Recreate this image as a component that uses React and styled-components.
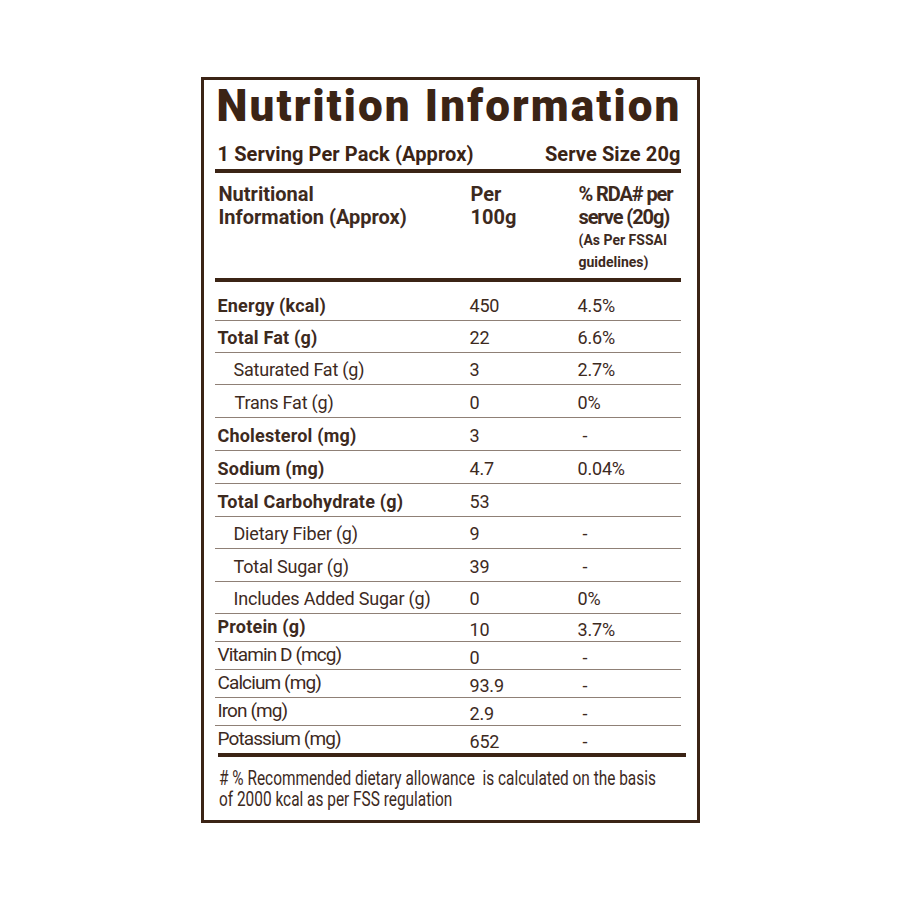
import React from 'react';
import styled, { createGlobalStyle } from 'styled-components';

const GlobalStyle = createGlobalStyle`
  body {
    margin: 0;
    background: #ffffff;
    font-family: Roboto, "Liberation Sans", Arial, sans-serif;
  }
`;

const BROWN = '#3b2415';
const TEXT = '#3d2a1e';
const LINE = '#8f8076';

const Page = styled.div`
  width: 900px;
  height: 900px;
  padding-top: 77px;
  box-sizing: border-box;
`;

const Label = styled.div`
  width: 499px;
  height: 746px;
  margin: 0 auto;
  border: 3px solid ${BROWN};
  box-sizing: border-box;
  padding: 0 16px 0 11px;
  display: flex;
  flex-direction: column;
  color: ${TEXT};
`;

const Title = styled.h1`
  margin: 4px 0 0 2px;
  font-size: 44px;
  line-height: 44px;
  font-weight: 900;
  color: ${BROWN};
  letter-spacing: 2.1px;
  white-space: nowrap;
`;

const Serving = styled.div`
  margin: 15px 0 4px 3px;
  display: flex;
  justify-content: space-between;
  font-size: 20px;
  line-height: 22px;
  font-weight: 700;
  letter-spacing: 0.1px;
  color: ${BROWN};
`;

const Rule = styled.div`
  height: 4px;
  background: ${BROWN};
  margin-right: ${p => p.$over || 0}px;
  margin-left: ${p => p.$shift || 0}px;
`;

const Header = styled.div`
  height: 105px;
  box-sizing: border-box;
  padding: 10px 0 0 4px;
  display: grid;
  grid-template-columns: 252px 108px 1fr;
  align-items: start;
  font-size: 20px;
  line-height: 22.5px;
  font-weight: 700;
  white-space: nowrap;
`;

const RdaHead = styled.div`
  letter-spacing: -1.1px;
`;

const Small = styled.div`
  margin-top: 2px;
  font-size: 14px;
  line-height: 21.7px;
  font-weight: 700;
  letter-spacing: 0;
`;

const Row = styled.div`
  height: ${p => p.$h}px;
  box-sizing: border-box;
  padding-left: 3px;
  border-bottom: ${p => (p.$last ? 'none' : `1px solid ${LINE}`)};
  display: grid;
  grid-template-columns: 252px 108px 1fr;
  align-items: end;
  font-size: 18px;
  line-height: 20px;
`;

const Name = styled.div`
  padding-left: ${p => p.$indent || 0}px;
  padding-bottom: 4px;
  font-weight: ${p => (p.$bold ? 700 : 400)};
  font-size: ${p => (p.$big ? '19px' : '18px')};
  letter-spacing: ${p => (p.$big ? '-0.9px' : p.$bold ? '0.2px' : '-0.2px')};
  white-space: nowrap;
`;

const Value = styled.div`
  padding-bottom: ${p => (p.$drop ? 1 : 4)}px;
  padding-left: ${p => (p.$dash ? 5 : 0)}px;
  letter-spacing: -0.2px;
`;

const Footnote = styled.p`
  margin: 11px 0 0 4px;
  font-size: 19.5px;
  line-height: 21px;
  width: 560px;
  transform: scaleX(0.79);
  transform-origin: left top;
  white-space: pre;
`;

const rows = [
  { label: 'Energy (kcal)', bold: true, per: '450', rda: '4.5%', h: 39 },
  { label: 'Total Fat (g)', bold: true, per: '22', rda: '6.6%', h: 32 },
  { label: 'Saturated Fat (g)', indent: 16, per: '3', rda: '2.7%', h: 32 },
  { label: 'Trans Fat (g)', indent: 17, per: '0', rda: '0%', h: 33 },
  { label: 'Cholesterol (mg)', bold: true, per: '3', rda: '-', h: 33 },
  { label: 'Sodium (mg)', bold: true, per: '4.7', rda: '0.04%', h: 33 },
  { label: 'Total Carbohydrate (g)', bold: true, per: '53', rda: '', h: 33 },
  { label: 'Dietary Fiber (g)', indent: 16, per: '9', rda: '-', h: 32 },
  { label: 'Total Sugar (g)', indent: 16, per: '39', rda: '-', h: 33 },
  { label: 'Includes Added Sugar (g)', indent: 16, per: '0', rda: '0%', h: 32 },
  { label: 'Protein (g)', bold: true, per: '10', rda: '3.7%', h: 28, drop: true },
  { label: 'Vitamin D (mcg)', big: true, per: '0', rda: '-', h: 28, drop: true },
  { label: 'Calcium (mg)', big: true, per: '93.9', rda: '-', h: 28, drop: true },
  { label: 'Iron (mg)', big: true, per: '2.9', rda: '-', h: 28, drop: true },
  { label: 'Potassium (mg)', big: true, per: '652', rda: '-', h: 27, drop: true, last: true },
];

export default function App() {
  return (
    <Page>
      <GlobalStyle />
      <Label>
        <Title>Nutrition Information</Title>
        <Serving>
          <span>1 Serving Per Pack (Approx)</span>
          <span>Serve Size 20g</span>
        </Serving>
        <Rule />
        <Header>
          <div>Nutritional<br />Information (Approx)</div>
          <div>Per<br />100g</div>
          <RdaHead>
            % RDA# per<br />serve (20g)
            <Small>(As Per FSSAI<br />guidelines)</Small>
          </RdaHead>
        </Header>
        <Rule />
        {rows.map(r => (
          <Row key={r.label} $h={r.h} $last={r.last}>
            <Name $bold={r.bold} $indent={r.indent} $big={r.big}>{r.label}</Name>
            <Value $drop={r.drop}>{r.per}</Value>
            <Value $drop={r.drop} $dash={r.rda === '-'}>{r.rda}</Value>
          </Row>
        ))}
        <Rule $shift={3} $over={-5} />
        <Footnote>
          {'# % Recommended dietary allowance  is calculated on the basis\nof 2000 kcal as per FSS regulation'}
        </Footnote>
      </Label>
    </Page>
  );
}
